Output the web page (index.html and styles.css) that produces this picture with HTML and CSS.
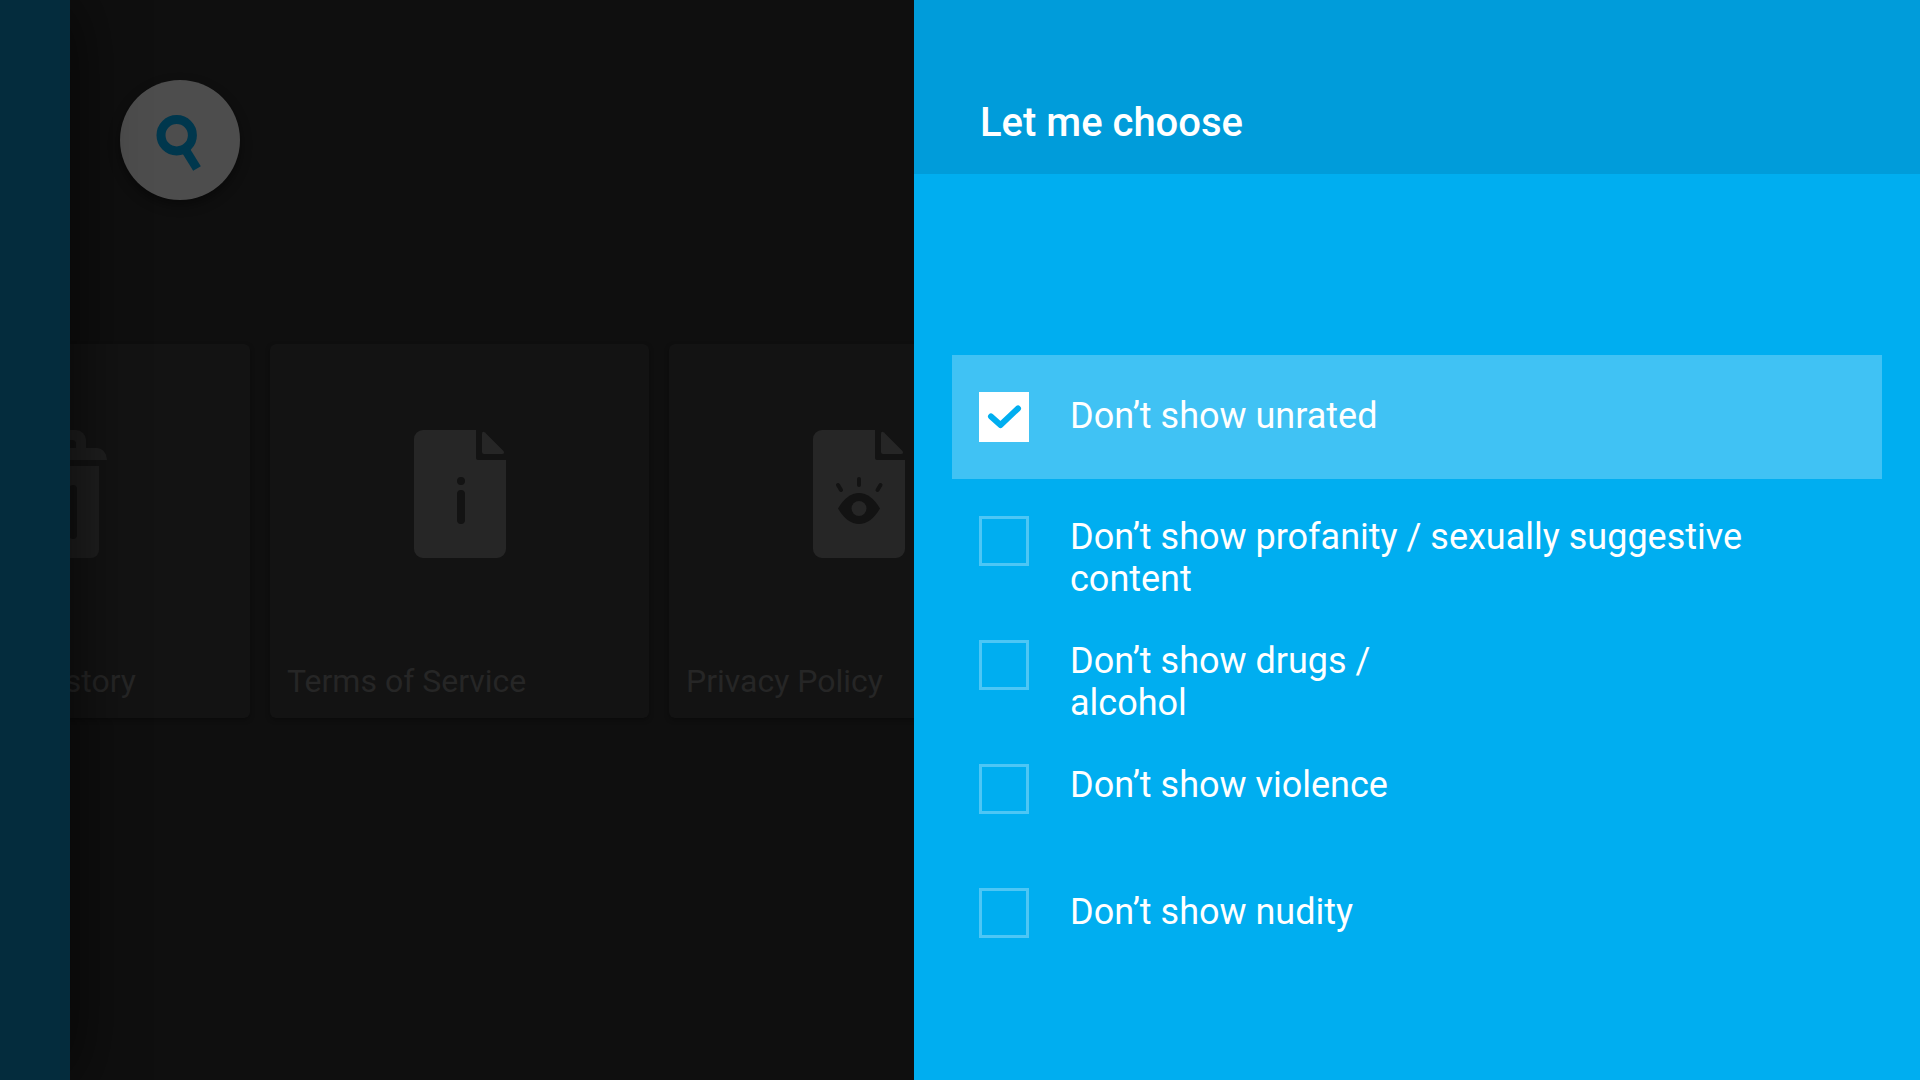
FILE: index.html
```html
<!DOCTYPE html>
<html lang="en">

<head>
  <meta charset="UTF-8" />
  <meta name="viewport" content="width=device-width, initial-scale=1.0" />
  <title>Let me choose</title>
  <link rel="stylesheet" href="styles.css">
</head>

<body>
  <div class="screen">
    <div class="rail"></div>

    <main class="browse">
      <button type="button" class="search" aria-label="Search">
        <svg width="120" height="120" viewBox="0 0 120 120">
          <circle cx="56.700" cy="55.200" r="15.700" fill="none" stroke="#00374d" stroke-width="9" />
          <path d="M64 67.500 77 88.500" stroke="#00374d" stroke-width="9" />
        </svg>
      </button>

      <div class="cards">
        <a href="#" class="card">
          <span class="card-icon">
            <svg width="92" height="128" viewBox="0 0 92 128" fill="#1f1f1f">
              <path fill-rule="evenodd" d="M0 30a10 12 0 0 1 10-12h11V10A10 10 0 0 1 31 0h30a10 10 0 0 1 10 10v8h11a10 12 0 0 1 10 12ZM31 18h30v-4a4 4 0 0 0-4-4H35a4 4 0 0 0-4 4Z" />
              <path fill-rule="evenodd" d="M8 36h76v84a8 8 0 0 1-8 8H16a8 8 0 0 1-8-8ZM30 59v46a4 4 0 0 0 8 0V59a4 4 0 0 0-8 0ZM54 59v46a4 4 0 0 0 8 0V59a4 4 0 0 0-8 0Z" />
            </svg>
          </span>
          <span class="card-label">Clear your history</span>
        </a>

        <a href="#" class="card">
          <span class="card-icon">
            <svg width="92" height="128" viewBox="0 0 92 128" fill="#262626">
              <path d="M9 0h53v28q0 2 2 2h28v89a9 9 0 0 1-9 9H9a9 9 0 0 1-9-9V9a9 9 0 0 1 9-9Z" />
              <path d="M68 4q0-3.500 3-1.500L89.500 21q1.500 3-1.500 3H70q-2 0-2-2Z" />
              <circle cx="47" cy="51" r="4" fill="#131313" />
              <rect x="43" y="60" width="8" height="34" rx="4" fill="#131313" />
            </svg>
          </span>
          <span class="card-label">Terms of Service</span>
        </a>

        <a href="#" class="card">
          <span class="card-icon">
            <svg width="92" height="128" viewBox="0 0 92 128" fill="#262626">
              <path d="M9 0h53v28q0 2 2 2h28v89a9 9 0 0 1-9 9H9a9 9 0 0 1-9-9V9a9 9 0 0 1 9-9Z" />
              <path d="M68 4q0-3.500 3-1.500L89.500 21q1.500 3-1.500 3H70q-2 0-2-2Z" />
              <path d="M25 78.500Q34 63 46 63T67 78.500Q58 94 46 94T25 78.500Z" fill="#131313" />
              <circle cx="46" cy="78.500" r="7.500" />
              <path d="M46 49v6M25 55l3 5M67.500 55l-3 5" stroke="#131313" stroke-width="4" stroke-linecap="round" />
            </svg>
          </span>
          <span class="card-label">Privacy Policy</span>
        </a>
      </div>
    </main>

    <section class="panel">
      <header class="panel-header">
        <h1>Let me choose</h1>
      </header>

      <form class="options">
        <label class="option active">
          <input type="checkbox" checked>
          <svg class="tick" width="50" height="50" viewBox="0 0 50 50">
            <path d="M12 24.500 21.500 33 39 16.500" fill="none" stroke="#00aef0" stroke-width="6" stroke-linecap="round" stroke-linejoin="round" />
          </svg>
          <span class="option-text single">Don’t show unrated</span>
        </label>
        <label class="option">
          <input type="checkbox">
          <span class="option-text">Don’t show profanity / sexually suggestive<br>content</span>
        </label>
        <label class="option">
          <input type="checkbox">
          <span class="option-text">Don’t show drugs /<br>alcohol</span>
        </label>
        <label class="option">
          <input type="checkbox">
          <span class="option-text">Don’t show violence</span>
        </label>
        <label class="option">
          <input type="checkbox">
          <span class="option-text single">Don’t show nudity</span>
        </label>
      </form>
    </section>
  </div>
</body>

</html>
```

FILE: styles.css
```css
* {
  box-sizing: border-box;
}

body {
  margin: 0;
  background-color: #0f0f0f;
  font-family: Roboto, sans-serif;
}

.screen {
  display: grid;
  grid-template-columns: 70px 422fr 503fr;
  min-height: 100vh;
}

.rail {
  position: relative;
  z-index: 1;
  background-color: #042c3d;
  box-shadow: 0 0 70px rgba(0, 0, 0, 0.7);
}

/* dimmed content behind the panel */
.browse {
  min-width: 0;
  padding-top: 80px;
  overflow: hidden;
}

.search {
  display: block;
  width: 120px;
  height: 120px;
  margin-left: 50px;
  padding: 0;
  border: none;
  border-radius: 50%;
  background-color: #4d4d4d;
  box-shadow: 0 5px 12px rgba(0, 0, 0, 0.4);
}

.search svg {
  display: block;
}

.cards {
  display: flex;
  gap: 20px;
  margin-top: 144px;
  margin-left: -199px;
}

.card {
  display: flex;
  flex-direction: column;
  flex: 0 0 379px;
  height: 374px;
  border-radius: 6px;
  background-color: #131313;
  box-shadow: 0 2px 5px rgba(0, 0, 0, 0.3);
  color: #262626;
  text-decoration: none;
}

.card-icon {
  display: flex;
  flex: 1;
  align-items: center;
  justify-content: center;
}

.card-label {
  height: 75px;
  padding: 0 17px;
  font-size: 32px;
  line-height: 77px;
  white-space: nowrap;
}

/* settings panel */
.panel {
  position: relative;
  z-index: 2;
  background-color: #00aef0;
  color: #fff;
}

.panel-header {
  height: 174px;
  padding: 99px 66px 0;
  background-color: #009cda;
}

.panel-header h1 {
  margin: 0;
  font-size: 40px;
  font-weight: 500;
  line-height: 48px;
}

.options {
  padding: 181px 38px 0;
}

.option {
  position: relative;
  display: flex;
  align-items: flex-start;
  gap: 41px;
  min-height: 124px;
  padding: 37px 27px 0;
  font-size: 36px;
  line-height: 42px;
}

.option.active {
  background-color: #40c2f4;
}

.option input {
  appearance: none;
  flex: none;
  width: 50px;
  height: 50px;
  margin: 0;
  border: 3px solid #4dc6f5;
}

.option input:checked {
  border-color: #fff;
  background-color: #fff;
}

.tick {
  position: absolute;
  top: 37px;
  left: 27px;
  pointer-events: none;
}

.single {
  padding-top: 3px;
}
```
